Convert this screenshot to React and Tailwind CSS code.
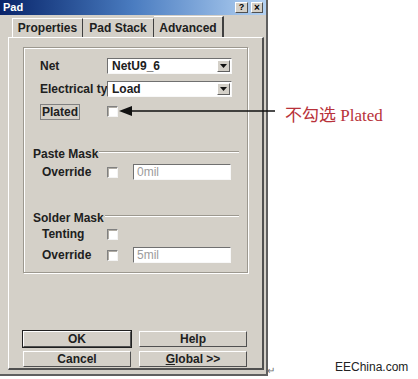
import React from "react";

const font = { fontFamily: '"Liberation Sans", Arial, sans-serif' };

function Check() {
  return (
    <span className="block h-[11px] w-[11px] border-t border-l border-t-[#808080] border-l-[#808080] border-b border-r border-b-[#f4f4f4] border-r-[#f4f4f4] bg-white shadow-[inset_1px_1px_0_#b0aca4]" />
  );
}

function Select({ value }) {
  return (
    <div className="flex h-[16px] w-[125px] border-t border-l border-[#707070] border-b border-r border-b-[#f8f8f8] border-r-[#f8f8f8] bg-white">
      <span className="flex-1 pl-[4px] text-[12px] font-bold leading-[14px] text-[#202020]">{value}</span>
      <span className="my-[1px] mr-[1px] flex w-[13px] items-center justify-center border-t border-l border-white border-b border-r border-b-[#606060] border-r-[#606060] bg-[#d4d0c8]">
        <svg width="7" height="4" viewBox="0 0 7 4"><path d="M0 0h7L3.5 4z" fill="#111" /></svg>
      </span>
    </div>
  );
}

function Field({ value }) {
  return (
    <div className="h-[16px] w-[98px] border-t border-l border-[#707070] border-b border-r border-b-[#f8f8f8] border-r-[#f8f8f8] bg-white pl-[3px] text-[12px] leading-[14px] text-[#9c9c9c]">
      {value}
    </div>
  );
}

function Heading({ label, mt }) {
  return (
    <div className={`flex h-[14px] items-center pl-[9px] pr-[8px] ${mt}`}>
      <span className="text-[12px] font-bold leading-[14px] text-[#202020]">{label}</span>
      <span className="ml-[1px] h-[2px] flex-1 border-t border-t-[#9c988f] border-b border-b-white -translate-y-[2px]" />
    </div>
  );
}

function Btn({ children, isDefault }) {
  return (
    <div className={`flex h-[16px] w-[108px] items-center justify-center ${isDefault ? "outline outline-1 outline-[#202020]" : ""} border-t border-l border-white border-b border-r border-b-[#505050] border-r-[#505050] bg-[#d4d0c8] text-[12px] font-bold text-[#202020]`}>
      {children}
    </div>
  );
}

export default function App() {
  return (
    <div className="relative h-[379px] w-[418px] overflow-hidden bg-white" style={font}>
      {/* dialog */}
      <div className="flex h-[376px] w-[268px] flex-col border-r-2 border-b-2 border-r-[#606060] border-b-[#606060] bg-[#d4d0c8]">
        {/* title bar */}
        <div className="flex h-[15px] items-center bg-gradient-to-r from-[#0a246a] via-[#4a7cc0] to-[#b4d2f2] pl-[3px] pr-[3px]">
          <span className="flex-1 text-[11px] font-bold text-white">Pad</span>
          <span className="mr-[3px] flex h-[11px] w-[13px] items-center justify-center border-t border-l border-white border-b border-r border-b-[#505050] border-r-[#505050] bg-[#d4d0c8] text-[9px] font-bold leading-none text-black">?</span>
          <span className="flex h-[11px] w-[12px] items-center justify-center border-t border-l border-white border-b border-r border-b-[#505050] border-r-[#505050] bg-[#d4d0c8] text-[10px] font-bold leading-none text-black">×</span>
        </div>

        {/* tabs */}
        <div className="flex h-[22px] items-end pl-[12px]">
          <div className="flex h-[19px] w-[71px] items-center justify-center border-t border-l border-white border-r border-r-[#404040] text-[12px] font-bold text-[#202020]">
            Properties
          </div>
          <div className="flex h-[19px] w-[71px] items-center justify-center border-t border-white border-r border-r-[#404040] text-[12px] font-bold text-[#202020]">
            Pad Stack
          </div>
          <div className="-mb-[1px] flex h-[22px] w-[70px] items-start justify-center border-t border-white border-r-2 border-r-[#404040] bg-[#d4d0c8] pt-[2px] text-[12px] font-bold text-[#202020]">
            Advanced
          </div>
        </div>

        {/* panel */}
        <div className="ml-[8px] flex h-[333px] w-[256px] flex-col border-t border-l border-white border-r-2 border-b-2 border-r-[#505050] border-b-[#505050]">
          {/* group box */}
          <div className="ml-[14px] mt-[9px] h-[226px] w-[225px] border border-[#9c988f] shadow-[inset_1px_1px_0_#fff,1px_1px_0_#fff]">
            <div className="flex flex-col pl-[16px]">
              <div className="mt-[10px] flex h-[16px] items-center">
                <span className="w-[67px] text-[12px] font-bold text-[#202020]">Net</span>
                <Select value="NetU9_6" />
              </div>
              <div className="mt-[7px] flex h-[16px] items-center">
                <span className="w-[67px] whitespace-nowrap text-[12px] font-bold text-[#202020]">Electrical ty</span>
                <Select value="Load" />
              </div>
              <div className="mt-[7px] flex h-[14px] items-center">
                <span className="w-[67px]">
                  <span className="border border-[#808080] px-[1px] text-[12px] font-bold leading-[12px] text-[#202020]">Plated</span>
                </span>
                <Check />
              </div>
            </div>

            <Heading label="Paste Mask" mt="mt-[29px]" />
            <div className="mt-[3px] flex h-[16px] items-center pl-[18px]">
              <span className="w-[65px] text-[12px] font-bold text-[#202020]">Override</span>
              <Check />
              <span className="ml-[15px]"><Field value="0mil" /></span>
            </div>

            <Heading label="Solder Mask" mt="mt-[31px]" />
            <div className="mt-[2px] flex h-[14px] items-center pl-[18px]">
              <span className="w-[65px] text-[12px] font-bold text-[#202020]">Tenting</span>
              <Check />
            </div>
            <div className="mt-[6px] flex h-[16px] items-center pl-[18px]">
              <span className="w-[65px] text-[12px] font-bold text-[#202020]">Override</span>
              <Check />
              <span className="ml-[15px]"><Field value="5mil" /></span>
            </div>
          </div>

          {/* buttons */}
          <div className="ml-[14px] mt-[58px] grid w-[224px] grid-cols-2 gap-x-[8px] gap-y-[4px]">
            <Btn isDefault>OK</Btn>
            <Btn>Help</Btn>
            <Btn>Cancel</Btn>
            <Btn>
              <span><span className="underline">G</span>lobal &gt;&gt;</span>
            </Btn>
          </div>
        </div>
      </div>

      {/* annotation arrow */}
      <svg className="absolute left-[119px] top-[105px]" width="156" height="12" viewBox="0 0 156 12">
        <path d="M10 6H156" stroke="#111" strokeWidth="1.5" />
        <path d="M0 6L13 1V11Z" fill="#111" />
      </svg>
      <div
        className="absolute left-[285px] top-[107px] whitespace-nowrap text-[17px] leading-[18px] text-[#b8323a]"
        style={{ fontFamily: '"Liberation Serif", "Noto Sans CJK SC", serif' }}
      >
        不勾选 Plated
      </div>

      <div className="absolute left-[267px] top-[366px] text-[10px] leading-none text-[#707070]">↵</div>
      <div className="absolute left-[335px] top-[360px] text-[12px] leading-[14px] text-[#222]">EEChina.com</div>
    </div>
  );
}
